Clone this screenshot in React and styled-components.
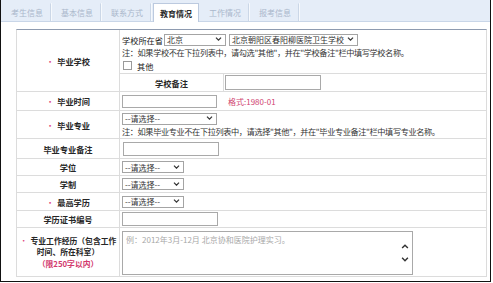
import React from "react";
import styled, { createGlobalStyle } from "styled-components";

const Global = createGlobalStyle`
  html, body { margin: 0; padding: 0; background: #fff; }
  body { font-family: "Noto Sans CJK SC", "Noto Sans", sans-serif; }
`;

const Frame = styled.div`
  width: 491px;
  height: 282px;
  box-sizing: border-box;
  border: 1px solid #111;
  border-top: none;
  background: #fff;
  font-size: 8.2px;
  color: #222;
`;

const TabBar = styled.div`
  height: 22px;
  box-sizing: border-box;
  background: #e5edf8;
  border-bottom: 1px solid #c9d6e8;
  display: flex;
  align-items: flex-end;
  padding-left: 2px;
`;

const Tab = styled.div`
  width: ${(p) => p.$w || 48}px;
  height: ${(p) => (p.$active ? 19 : 18)}px;
  margin-bottom: ${(p) => (p.$active ? -1 : 0)}px;
  box-sizing: border-box;
  display: flex;
  align-items: center;
  justify-content: center;
  font-size: 8px;
  color: ${(p) => (p.$active ? "#2a2a2a" : "#aab7cb")};
  font-weight: ${(p) => (p.$active ? 700 : 400)};
  background: ${(p) => (p.$active ? "#fff" : "transparent")};
  border: 1px solid ${(p) => (p.$active ? "#bccadf" : "transparent")};
  border-bottom: none;
  border-right: 1px solid ${(p) => (p.$active ? "#bccadf" : "#cbd7e7")};
  box-shadow: ${(p) => (p.$active ? "none" : "1px 0 0 #f6f9fd")};
  margin-right: 2px;
`;

const Body = styled.div`
  padding: 7px 3px 0 15px;
`;

const Table = styled.div`
  border: 1px solid #dcdcdc;
  border-top-color: #8e9bb0;
`;

const Row = styled.div`
  display: grid;
  grid-template-columns: 103px 1fr;
  height: ${(p) => p.$h}px;
  box-sizing: border-box;
  border-bottom: ${(p) => (p.$last ? "none" : "1px solid #dcdcdc")};
`;

const Label = styled.div`
  border-right: 1px solid #dcdcdc;
  display: flex;
  align-items: center;
  justify-content: center;
  font-weight: 700;
  font-size: ${(p) => (p.$small ? 7.8 : 8.2)}px;
  color: #262626;
  text-align: center;
  line-height: ${(p) => (p.$small ? 11.4 : 10)}px;
  white-space: nowrap;
`;

const Star = styled.span`
  color: #e0457d;
  font-weight: 400;
  margin-right: 3px;
`;

const Red = styled.span`
  color: #d2386c;
`;

const Cell = styled.div`
  display: flex;
  flex-direction: ${(p) => (p.$col ? "column" : "row")};
  align-items: ${(p) => (p.$top || p.$col ? "flex-start" : "center")};
  padding: ${(p) => p.$pad || "0 0 0 2px"};
  min-width: 0;
`;

const Line = styled.div`
  height: ${(p) => p.$h}px;
  display: flex;
  align-items: center;
  white-space: nowrap;
  padding-left: ${(p) => p.$pl || 0}px;
`;

const SelectBox = styled.div`
  width: ${(p) => p.$w}px;
  height: ${(p) => p.$h || 12}px;
  box-sizing: border-box;
  border: 1px solid #a4a4a4;
  background: #fff;
  display: flex;
  align-items: center;
  justify-content: space-between;
  padding: 0 3px 0 2px;
  margin-left: ${(p) => p.$ml || 0}px;
  font-size: 8px;
  color: #333;
  white-space: nowrap;
`;

const Input = styled.div`
  width: ${(p) => p.$w}px;
  height: ${(p) => p.$h || 13}px;
  box-sizing: border-box;
  border: 1px solid #a9a9a9;
  background: #fff;
  margin-left: ${(p) => p.$ml || 0}px;
`;

const Note = styled.div`
  font-size: 8.2px;
  letter-spacing: -0.4px;
  color: #333;
  white-space: nowrap;
`;

const Check = styled.div`
  width: 9px;
  height: 9px;
  box-sizing: border-box;
  border: 1px solid #9a9a9a;
  background: #fff;
  margin-right: 5px;
`;

const SubRow = styled.div`
  align-self: stretch;
  display: grid;
  grid-template-columns: 104px 1fr;
  height: 18px;
  box-sizing: border-box;
  border-top: 1px solid #dcdcdc;
  margin-left: -2px;
`;

const Hint = styled.span`
  margin-left: 11px;
  color: #d04470;
  font-size: 8px;
`;

const TextArea = styled.div`
  width: 291px;
  height: 44px;
  box-sizing: border-box;
  border: 1px solid #a9a9a9;
  background: #fff;
  display: flex;
  justify-content: space-between;
  margin-left: 1px;
`;

const Placeholder = styled.div`
  padding: 2px 3px;
  color: #a8a8a8;
  font-size: 8px;
  white-space: nowrap;
`;

const Scroll = styled.div`
  width: 12px;
  display: flex;
  flex-direction: column;
  align-items: center;
  justify-content: center;
  gap: 8px;
  margin-right: 1px;
`;

const Chevron = ({ up, size = 7 }) => (
  <svg width={size} height={size * 0.6} viewBox="0 0 8 5" style={{ display: "block" }}>
    <path
      d={up ? "M1 4.2 L4 1.2 L7 4.2" : "M1 0.8 L4 3.8 L7 0.8"}
      fill="none"
      stroke="#333"
      strokeWidth="1.5"
    />
  </svg>
);

const Select = ({ w, children, ml, h }) => (
  <SelectBox $w={w} $ml={ml} $h={h}>
    <span>{children}</span>
    <Chevron />
  </SelectBox>
);

const tabs = ["考生信息", "基本信息", "联系方式", "教育情况", "工作情况", "报考信息"];

export default function App() {
  return (
    <>
      <Global />
      <Frame>
        <TabBar>
          {tabs.map((t, i) => (
            <Tab key={t} $active={i === 3} $w={i === 3 ? 46 : 48}>
              {t}
            </Tab>
          ))}
        </TabBar>
        <Body>
          <Table>
            <Row $h={62}>
              <Label>
                <Star>•</Star>毕业学校
              </Label>
              <Cell $col $pad="3px 0 0 2px">
                <Line $h={13}>
                  学校所在省
                  <Select w={62} ml={1}>北京</Select>
                  <Select w={129} ml={3}>北京朝阳区春阳柳医院卫生学校</Select>
                </Line>
                <Line $h={12}>
                  <Note>注：如果学校不在下拉列表中，请勾选"其他"，并在"学校备注"栏中填写学校名称。</Note>
                </Line>
                <Line $h={15} $pl={1}>
                  <Check />
                  其他
                </Line>
                <SubRow>
                  <Label>学校备注</Label>
                  <Cell $pad="0 0 0 1px">
                    <Input $w={96} $h={15} />
                  </Cell>
                </SubRow>
              </Cell>
            </Row>
            <Row $h={19}>
              <Label>
                <Star>•</Star>毕业时间
              </Label>
              <Cell>
                <Input $w={95} $h={13} />
                <Hint>格式:1980-01</Hint>
              </Cell>
            </Row>
            <Row $h={28}>
              <Label>
                <Star>•</Star>毕业专业
              </Label>
              <Cell $col $pad="1px 0 0 2px">
                <Line $h={13}>
                  <Select w={95} h={12}>--请选择--</Select>
                </Line>
                <Line $h={12}>
                  <Note>注：如果毕业专业不在下拉列表中，请选择"其他"，并在"毕业专业备注"栏中填写专业名称。</Note>
                </Line>
              </Cell>
            </Row>
            <Row $h={20}>
              <Label>毕业专业备注</Label>
              <Cell>
                <Input $w={96} $h={14} $ml={1} />
              </Cell>
            </Row>
            <Row $h={17}>
              <Label>学位</Label>
              <Cell>
                <Select w={62}>--请选择--</Select>
              </Cell>
            </Row>
            <Row $h={17}>
              <Label>学制</Label>
              <Cell>
                <Select w={62}>--请选择--</Select>
              </Cell>
            </Row>
            <Row $h={18}>
              <Label>
                <Star>•</Star>最高学历
              </Label>
              <Cell>
                <Select w={62}>--请选择--</Select>
              </Cell>
            </Row>
            <Row $h={17}>
              <Label>学历证书编号</Label>
              <Cell>
                <Input $w={96} $h={14} />
              </Cell>
            </Row>
            <Row $h={48} $last>
              <Label $small>
                <div>
                  <Star>•</Star>专业工作经历（包含工作
                  <br />
                  时间、所在科室）
                  <br />
                  <Red>（限250字以内）</Red>
                </div>
              </Label>
              <Cell $top $pad="3px 0 0 1px">
                <TextArea>
                  <Placeholder>例：2012年3月-12月 北京协和医院护理实习。</Placeholder>
                  <Scroll>
                    <Chevron up size={8} />
                    <Chevron size={8} />
                  </Scroll>
                </TextArea>
              </Cell>
            </Row>
          </Table>
        </Body>
      </Frame>
    </>
  );
}
